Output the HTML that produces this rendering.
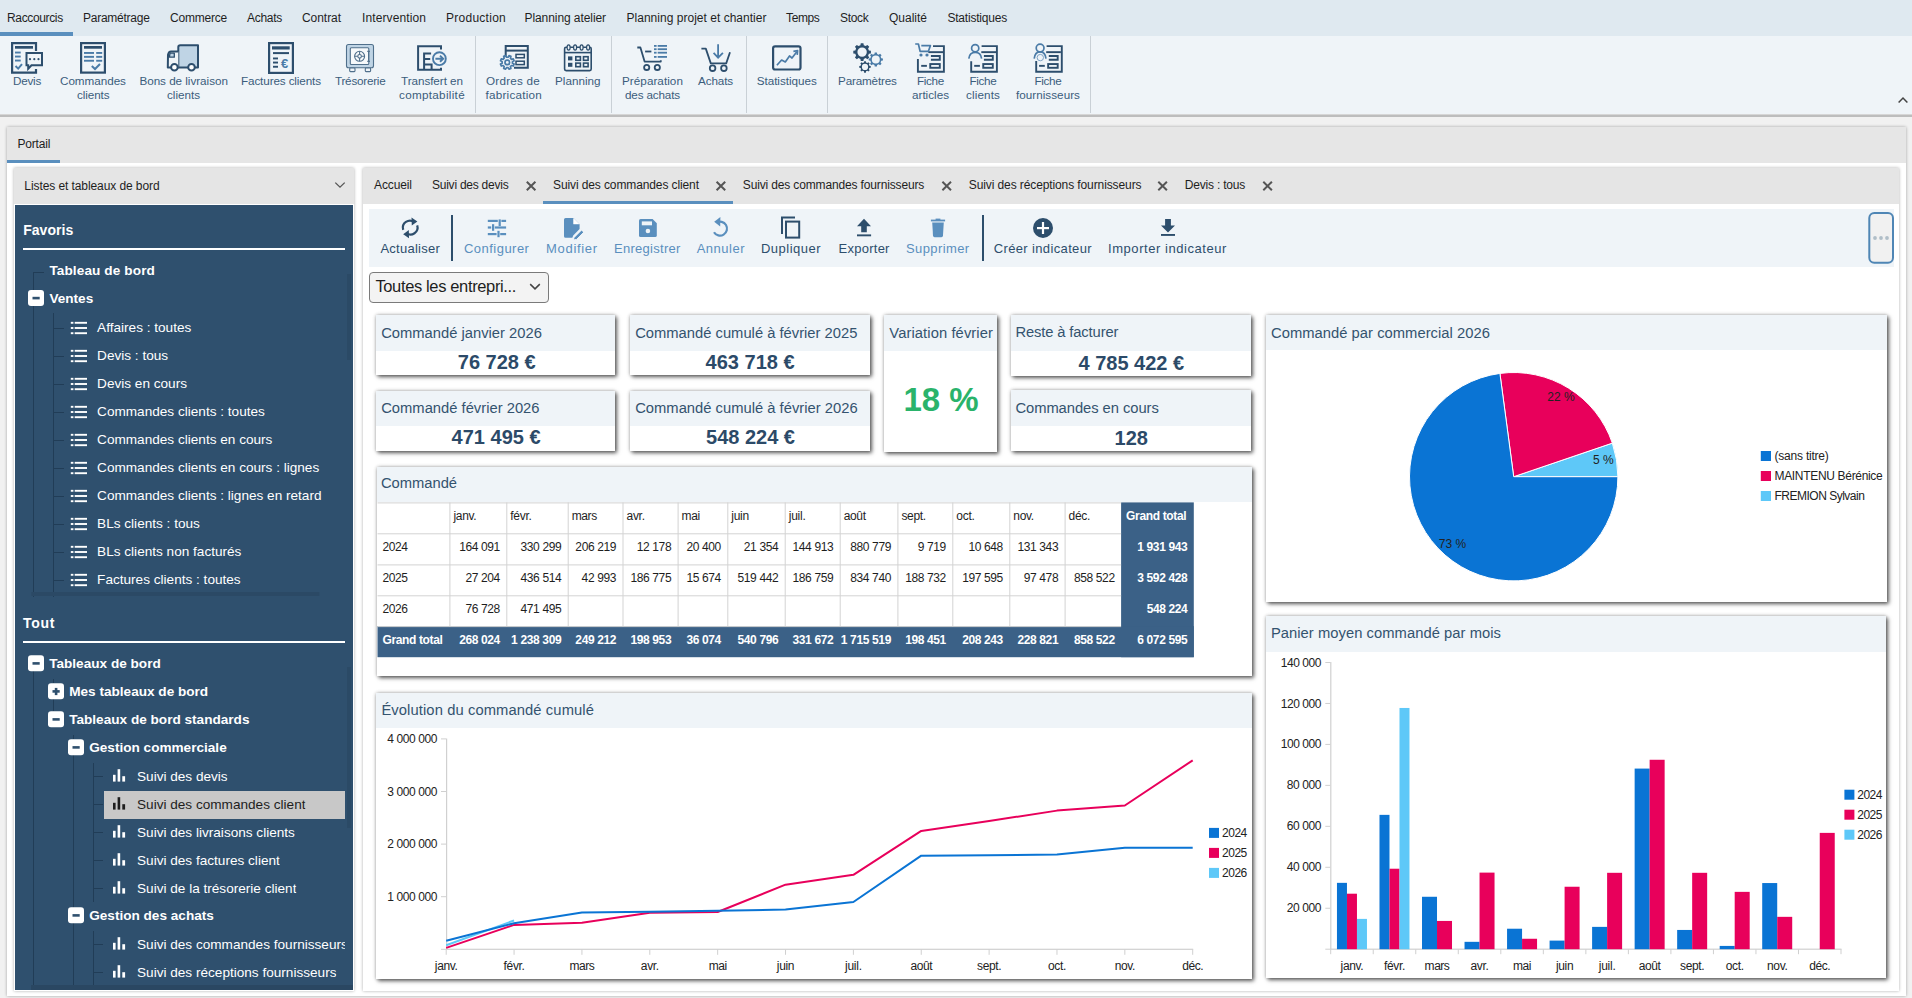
<!DOCTYPE html><html><head><meta charset="utf-8"><style>
html,body{margin:0;padding:0;}
body{width:1912px;height:998px;position:relative;overflow:hidden;background:#f1f1f1;font-family:"Liberation Sans",sans-serif;}
body div{position:absolute;}
.t{white-space:nowrap;}
svg{position:absolute;left:0;top:0;overflow:visible;}
</style></head><body>
<div style="left:0px;top:0px;width:1912px;height:36px;background:#dfe9f0;"></div>
<div style="left:0px;top:32px;width:73px;height:4px;background:#5a8fbe;"></div>
<div class="t" style="left:7.00px;top:11.84px;font-size:12px;line-height:12px;color:#1f1f1f;letter-spacing:-0.355px;">Raccourcis</div>
<div class="t" style="left:83.00px;top:11.84px;font-size:12px;line-height:12px;color:#1f1f1f;letter-spacing:-0.251px;">Paramétrage</div>
<div class="t" style="left:170.00px;top:11.84px;font-size:12px;line-height:12px;color:#1f1f1f;letter-spacing:-0.209px;">Commerce</div>
<div class="t" style="left:247.00px;top:11.84px;font-size:12px;line-height:12px;color:#1f1f1f;letter-spacing:-0.281px;">Achats</div>
<div class="t" style="left:302.00px;top:11.84px;font-size:12px;line-height:12px;color:#1f1f1f;letter-spacing:-0.050px;">Contrat</div>
<div class="t" style="left:362.00px;top:11.84px;font-size:12px;line-height:12px;color:#1f1f1f;letter-spacing:0.108px;">Intervention</div>
<div class="t" style="left:446.00px;top:11.84px;font-size:12px;line-height:12px;color:#1f1f1f;letter-spacing:0.263px;">Production</div>
<div class="t" style="left:524.50px;top:11.84px;font-size:12px;line-height:12px;color:#1f1f1f;letter-spacing:-0.076px;">Planning atelier</div>
<div class="t" style="left:626.50px;top:11.84px;font-size:12px;line-height:12px;color:#1f1f1f;letter-spacing:0.022px;">Planning projet et chantier</div>
<div class="t" style="left:786.00px;top:11.84px;font-size:12px;line-height:12px;color:#1f1f1f;letter-spacing:-0.368px;">Temps</div>
<div class="t" style="left:840.00px;top:11.84px;font-size:12px;line-height:12px;color:#1f1f1f;letter-spacing:-0.302px;">Stock</div>
<div class="t" style="left:889.00px;top:11.84px;font-size:12px;line-height:12px;color:#1f1f1f;letter-spacing:-0.003px;">Qualité</div>
<div class="t" style="left:947.40px;top:11.84px;font-size:12px;line-height:12px;color:#1f1f1f;letter-spacing:-0.203px;">Statistiques</div>
<div style="left:0px;top:36px;width:1912px;height:78px;background:#eff4f8;"></div>
<div style="left:0px;top:114px;width:1912px;height:1px;background:#d6d6d6;"></div>
<div style="left:0px;top:115px;width:1912px;height:2px;background:#bdbdbd;"></div>
<div style="left:475px;top:36px;width:1px;height:77px;background:#c9d0d6;"></div>
<div style="left:611px;top:36px;width:1px;height:77px;background:#c9d0d6;"></div>
<div style="left:746px;top:36px;width:1px;height:77px;background:#c9d0d6;"></div>
<div style="left:827px;top:36px;width:1px;height:77px;background:#c9d0d6;"></div>
<div style="left:1090px;top:36px;width:1px;height:77px;background:#c9d0d6;"></div>
<div class="t" style="left:13.00px;top:75.10px;font-size:11.7px;line-height:11.7px;color:#3b5d7c;letter-spacing:-0.251px;">Devis</div>
<div class="t" style="left:60.00px;top:75.10px;font-size:11.7px;line-height:11.7px;color:#3b5d7c;letter-spacing:-0.036px;">Commandes</div>
<div class="t" style="left:77.00px;top:89.10px;font-size:11.7px;line-height:11.7px;color:#3b5d7c;letter-spacing:-0.095px;">clients</div>
<div class="t" style="left:139.40px;top:75.10px;font-size:11.7px;line-height:11.7px;color:#3b5d7c;letter-spacing:-0.029px;">Bons de livraison</div>
<div class="t" style="left:167.00px;top:89.10px;font-size:11.7px;line-height:11.7px;color:#3b5d7c;letter-spacing:-0.023px;">clients</div>
<div class="t" style="left:241.00px;top:75.10px;font-size:11.7px;line-height:11.7px;color:#3b5d7c;letter-spacing:-0.120px;">Factures clients</div>
<div class="t" style="left:335.00px;top:75.10px;font-size:11.7px;line-height:11.7px;color:#3b5d7c;letter-spacing:-0.237px;">Trésorerie</div>
<div class="t" style="left:401.00px;top:75.10px;font-size:11.7px;line-height:11.7px;color:#3b5d7c;letter-spacing:-0.053px;">Transfert en</div>
<div class="t" style="left:399.00px;top:89.10px;font-size:11.7px;line-height:11.7px;color:#3b5d7c;letter-spacing:0.298px;">comptabilité</div>
<div class="t" style="left:486.00px;top:75.10px;font-size:11.7px;line-height:11.7px;color:#3b5d7c;letter-spacing:0.220px;">Ordres de</div>
<div class="t" style="left:485.60px;top:89.10px;font-size:11.7px;line-height:11.7px;color:#3b5d7c;letter-spacing:0.220px;">fabrication</div>
<div class="t" style="left:555.00px;top:75.10px;font-size:11.7px;line-height:11.7px;color:#3b5d7c;letter-spacing:0.008px;">Planning</div>
<div class="t" style="left:622.00px;top:75.10px;font-size:11.7px;line-height:11.7px;color:#3b5d7c;letter-spacing:0.047px;">Préparation</div>
<div class="t" style="left:625.00px;top:89.10px;font-size:11.7px;line-height:11.7px;color:#3b5d7c;letter-spacing:-0.158px;">des achats</div>
<div class="t" style="left:698.00px;top:75.10px;font-size:11.7px;line-height:11.7px;color:#3b5d7c;letter-spacing:-0.128px;">Achats</div>
<div class="t" style="left:756.70px;top:75.10px;font-size:11.7px;line-height:11.7px;color:#3b5d7c;letter-spacing:-0.032px;">Statistiques</div>
<div class="t" style="left:838.00px;top:75.10px;font-size:11.7px;line-height:11.7px;color:#3b5d7c;letter-spacing:-0.167px;">Paramètres</div>
<div class="t" style="left:917.00px;top:75.10px;font-size:11.7px;line-height:11.7px;color:#3b5d7c;letter-spacing:-0.322px;">Fiche</div>
<div class="t" style="left:912.00px;top:89.10px;font-size:11.7px;line-height:11.7px;color:#3b5d7c;letter-spacing:-0.007px;">articles</div>
<div class="t" style="left:969.50px;top:75.10px;font-size:11.7px;line-height:11.7px;color:#3b5d7c;letter-spacing:-0.322px;">Fiche</div>
<div class="t" style="left:966.00px;top:89.10px;font-size:11.7px;line-height:11.7px;color:#3b5d7c;letter-spacing:0.120px;">clients</div>
<div class="t" style="left:1034.50px;top:75.10px;font-size:11.7px;line-height:11.7px;color:#3b5d7c;letter-spacing:-0.322px;">Fiche</div>
<div class="t" style="left:1016.00px;top:89.10px;font-size:11.7px;line-height:11.7px;color:#3b5d7c;letter-spacing:0.023px;">fournisseurs</div>
<svg width="1912" height="120" style="left:0;top:0">
<g fill="none" stroke="#2d4e6d" stroke-width="2.2">
 <!-- Devis -->
 <path d="M36,51 V43.1 H12.1 V72.6 H36 V69"/>
 <path d="M26.5,53 H42 V65.2 H31.5 L28.2,68.8 V65.2 H26.5 Z" fill="#eff4f8" stroke-width="2"/>
 <!-- Commandes -->
 <rect x="81.1" y="43.1" width="23.8" height="29.5"/>
 <!-- Factures -->
 <rect x="269.1" y="43.1" width="23.8" height="29.8"/>
</g>
<g fill="#2d4e6d">
 <rect x="15" y="46" width="18" height="2.7"/>
 <circle cx="30" cy="59.2" r="1.1"/><circle cx="34.3" cy="59.2" r="1.1"/><circle cx="38.5" cy="59.2" r="1.1"/>
 <rect x="84" y="46" width="18" height="2.7"/>
 <rect x="272" y="46.3" width="17.7" height="3.2"/>
 <rect x="273" y="52.1" width="16" height="2"/>
 <rect x="273" y="57.5" width="5" height="1.9"/><rect x="273" y="61.6" width="5" height="1.9"/><rect x="273" y="65.8" width="5" height="1.9"/>
</g>
<g fill="#4a7ba7">
 <rect x="15" y="51.6" width="5.7" height="1.9"/><rect x="15" y="55.6" width="5.7" height="1.9"/><rect x="15" y="59.6" width="5.7" height="1.9"/>
 <rect x="84" y="52" width="10" height="1.9"/><rect x="96.2" y="52" width="6" height="1.9"/>
 <rect x="84" y="55.9" width="10" height="1.9"/><rect x="96.2" y="55.9" width="6" height="1.9"/>
 <rect x="84" y="59.8" width="10" height="1.9"/><rect x="96.2" y="59.8" width="6" height="1.9"/>
</g>
<g fill="none" stroke="#4a7ba7" stroke-width="2">
 <path d="M15.5,66 L18.2,68.6 L22,64.2"/>
 <path d="M91.8,66 L95,69 L100,64"/>
</g>
<text x="284.5" y="67.6" font-family="Liberation Sans" font-weight="bold" font-size="13" fill="#4a7ba7" text-anchor="middle">€</text>
<!-- Truck -->
<g stroke="#2d4e6d" stroke-width="2" stroke-linejoin="round">
 <path d="M178.3,67.5 V47 Q178.3,45.2 180.3,45.2 H198 V67.5 Z" fill="#bfd4e5"/>
 <path d="M178.3,51.6 H171 Q168.6,51.6 168,55 L167.8,67.5 H178.3" fill="#eff4f8"/>
 <path d="M170,53.2 H174.3 V57.2 H169.4 Z" fill="#bfd4e5" stroke-width="1.3"/>
 <circle cx="174.4" cy="67.2" r="3.3" fill="#fff"/>
 <circle cx="191.5" cy="67.2" r="3.3" fill="#fff"/>
</g>
<!-- Tresorerie -->
<g stroke="#4f6f8b" stroke-width="1.1">
 <rect x="346.5" y="44.5" width="27" height="23.3" rx="2" fill="#bfd4e5"/>
 <rect x="349.7" y="68" width="5.3" height="3.6" rx="0.8" fill="#eff4f8"/>
 <rect x="365.3" y="68" width="5.3" height="3.6" rx="0.8" fill="#eff4f8"/>
 <rect x="350.3" y="47.8" width="18.5" height="16.7" rx="1" fill="#f6f9fb"/>
 <circle cx="359.6" cy="56.3" r="5" fill="none"/>
 <circle cx="359.6" cy="56.3" r="1.8" fill="none"/>
 <path d="M359.6,51.3 V54.5 M359.6,58.1 V61.3 M354.6,56.3 H357.8 M361.4,56.3 H364.6" />
 <path d="M368.6,51.2 V61.6 M367.3,51.4 H369.9 M367.3,61.4 H369.9"/>
</g>
<!-- Transfert -->
<g fill="none" stroke="#2d4e6d" stroke-width="2">
 <path d="M441,49.6 V46.2 H418.1 V69.8 H441 V67.8"/>
 <path d="M424.1,70 V53.4 H431.1 M424.1,59 H430.2 M424.1,64.5 H431.6 V70"/>
</g>
<g fill="none" stroke="#4a7ba7" stroke-width="1.9">
 <circle cx="439.4" cy="58.7" r="6.4"/>
 <path d="M435.4,58.7 H443 M440,55.6 L443.2,58.7 L440,61.8"/>
</g>
<!-- Ordres -->
<g fill="none" stroke="#2d4e6d">
 <path d="M505.7,60 V45.9 H527.8 V67.8 H514" stroke-width="2"/>
 <path d="M505.7,50.6 H527.8" stroke-width="2"/>
 <rect x="516" y="54.4" width="8.3" height="3.4" stroke-width="1.5"/>
 <rect x="516" y="61.2" width="8.3" height="3.4" stroke-width="1.5"/>
</g>
<path d="M512.44,63.17 L514.09,64.09 L513.30,66.01 L511.48,65.49 L510.39,66.58 L510.91,68.40 L508.99,69.19 L508.07,67.54 L506.53,67.54 L505.61,69.19 L503.69,68.40 L504.21,66.58 L503.12,65.49 L501.30,66.01 L500.51,64.09 L502.16,63.17 L502.16,61.63 L500.51,60.71 L501.30,58.79 L503.12,59.31 L504.21,58.22 L503.69,56.40 L505.61,55.61 L506.53,57.26 L508.07,57.26 L508.99,55.61 L510.91,56.40 L510.39,58.22 L511.48,59.31 L513.30,58.79 L514.09,60.71 L512.44,61.63 Z" fill="#eff4f8" stroke="#4a7ba7" stroke-width="1.7" stroke-linejoin="round"/><circle cx="507.3" cy="62.4" r="2.3" fill="none" stroke="#4a7ba7" stroke-width="1.7"/>
<!-- Planning -->
<g fill="none" stroke="#2d4e6d" stroke-width="1.6">
 <rect x="564.6" y="47.2" width="26.6" height="23.4" rx="1.5"/>
 <path d="M564.6,52.6 H591.2"/>
 <rect x="575.8" y="56.7" width="4.6" height="3.6"/><rect x="583.5" y="56.7" width="4.6" height="3.6"/>
 <rect x="575.8" y="63.1" width="4.6" height="3.6"/><rect x="583.5" y="63.1" width="4.6" height="3.6"/>
</g>
<g fill="#2d4e6d">
 <rect x="568" y="56.4" width="4.4" height="4"/><rect x="568" y="62.8" width="4.4" height="4"/>

</g>
<g fill="#eff4f8" stroke="#2d4e6d" stroke-width="1.2">
 <ellipse cx="568.6" cy="47.5" rx="1.5" ry="2.7"/><ellipse cx="575.1" cy="47.5" rx="1.5" ry="2.7"/>
 <ellipse cx="581.6" cy="47.5" rx="1.5" ry="2.7"/><ellipse cx="588.1" cy="47.5" rx="1.5" ry="2.7"/>
</g>
<!-- Preparation -->
<g fill="none" stroke="#2d4e6d" stroke-width="1.8" stroke-linejoin="round">
 <path d="M637.3,47.5 H640.4 L644.6,61.6 H660.8 V60.3"/>
 <circle cx="646.7" cy="67.4" r="2.6"/><circle cx="657.3" cy="67.4" r="2.6"/>
 <path d="M645.1,51.5 H651.4"/>
</g>
<g fill="#4a7ba7">
 <rect x="654" y="45" width="2.6" height="1.8"/><rect x="657.7" y="45" width="9.3" height="1.8"/>
 <rect x="654" y="48.3" width="2.6" height="1.8"/><rect x="657.7" y="48.3" width="9.3" height="1.8"/>
 <rect x="654" y="51.8" width="2.6" height="1.8"/><rect x="657.7" y="51.8" width="9.3" height="1.8"/>
 <rect x="654" y="56" width="2.6" height="1.8"/><rect x="657.7" y="56" width="9.3" height="1.8"/>
</g>
<!-- Achats -->
<g fill="none" stroke="#2d4e6d" stroke-width="1.8" stroke-linejoin="round">
 <path d="M701.4,48.6 H705.8 L710.8,63.4 H726.2 L730,52.2"/>
 <circle cx="712.6" cy="68.2" r="2.8"/><circle cx="723.9" cy="68.2" r="2.8"/>
</g>
<g fill="none" stroke="#4a7ba7" stroke-width="1.8">
 <path d="M718.1,44.2 V57.5 M713.6,52.8 L718.1,57.6 L722.9,52.8"/>
</g>
<!-- Statistiques -->
<rect x="773.1" y="46.3" width="27.4" height="23.2" rx="2" fill="none" stroke="#2d4e6d" stroke-width="2.2"/>
<g fill="none" stroke="#4a7ba7" stroke-width="1.7" stroke-linejoin="round">
 <path d="M776.9,65.3 L781.6,60 L785.3,61.9 L789.5,55.9 L792,58 L796.8,51.8"/>
 <path d="M793.4,51.3 L797.6,50.6 L797.2,54.8"/>
</g>
</svg>
<svg width="1912" height="120" style="left:0;top:0"><path fill="#2d4e6d" fill-rule="evenodd" d="M868.89,50.41 L870.90,50.78 L870.90,53.42 L868.89,53.79 L868.10,55.71 L869.26,57.39 L867.39,59.26 L865.71,58.10 L863.79,58.89 L863.42,60.90 L860.78,60.90 L860.41,58.89 L858.49,58.10 L856.81,59.26 L854.94,57.39 L856.10,55.71 L855.31,53.79 L853.30,53.42 L853.30,50.78 L855.31,50.41 L856.10,48.49 L854.94,46.81 L856.81,44.94 L858.49,46.10 L860.41,45.31 L860.78,43.30 L863.42,43.30 L863.79,45.31 L865.71,46.10 L867.39,44.94 L869.26,46.81 L868.10,48.49 Z M866.80,52.10 A4.7,4.7 0 1 0 857.40,52.10 A4.7,4.7 0 1 0 866.80,52.10 Z"/><path fill="#4a7ba7" fill-rule="evenodd" d="M881.23,58.15 L882.92,58.43 L882.92,60.57 L881.23,60.85 L880.60,62.39 L881.59,63.78 L880.08,65.29 L878.69,64.30 L877.15,64.93 L876.87,66.62 L874.73,66.62 L874.45,64.93 L872.91,64.30 L871.52,65.29 L870.01,63.78 L871.00,62.39 L870.37,60.85 L868.68,60.57 L868.68,58.43 L870.37,58.15 L871.00,56.61 L870.01,55.22 L871.52,53.71 L872.91,54.70 L874.45,54.07 L874.73,52.38 L876.87,52.38 L877.15,54.07 L878.69,54.70 L880.08,53.71 L881.59,55.22 L880.60,56.61 Z M879.80,59.50 A4.0,4.0 0 1 0 871.80,59.50 A4.0,4.0 0 1 0 879.80,59.50 Z"/><path fill="#2d4e6d" fill-rule="evenodd" d="M869.37,65.82 L870.74,66.04 L870.74,67.76 L869.37,67.98 L868.86,69.22 L869.67,70.35 L868.45,71.57 L867.32,70.76 L866.08,71.27 L865.86,72.64 L864.14,72.64 L863.92,71.27 L862.68,70.76 L861.55,71.57 L860.33,70.35 L861.14,69.22 L860.63,67.98 L859.26,67.76 L859.26,66.04 L860.63,65.82 L861.14,64.58 L860.33,63.45 L861.55,62.23 L862.68,63.04 L863.92,62.53 L864.14,61.16 L865.86,61.16 L866.08,62.53 L867.32,63.04 L868.45,62.23 L869.67,63.45 L868.86,64.58 Z M868.10,66.90 A3.1,3.1 0 1 0 861.90,66.90 A3.1,3.1 0 1 0 868.10,66.90 Z"/><path d="M933,46.1 H943.9 V71.7 H917.9 V59" fill="none" stroke="#2d4e6d" stroke-width="1.9"/><rect x="928.3" y="51.2" width="14.7" height="1.9" fill="#2d4e6d"/><path d="M930.9,56.05 H939.8 V59.75 H930.9" fill="none" stroke="#2d4e6d" stroke-width="1.9"/><rect x="930.25" y="64.05" width="9.55" height="3.75" fill="none" stroke="#2d4e6d" stroke-width="1.9"/><rect x="921.1999999999999" y="64.9" width="5.7" height="1.9" fill="#2d4e6d"/><path d="M981.6,46.1 H996.9 V71.7 H971.1999999999999 V61.2" fill="none" stroke="#2d4e6d" stroke-width="1.9"/><rect x="981.3" y="51.2" width="14.7" height="1.9" fill="#2d4e6d"/><path d="M983.9,56.05 H992.8 V59.75 H983.9" fill="none" stroke="#2d4e6d" stroke-width="1.9"/><rect x="983.25" y="64.05" width="9.55" height="3.75" fill="none" stroke="#2d4e6d" stroke-width="1.9"/><rect x="974.1999999999999" y="64.9" width="5.7" height="1.9" fill="#2d4e6d"/><path d="M1046.6,46.1 H1061.8 V71.7 H1036.2 V61.1" fill="none" stroke="#2d4e6d" stroke-width="1.9"/><rect x="1046.2" y="51.2" width="14.7" height="1.9" fill="#2d4e6d"/><path d="M1048.8,56.05 H1057.7 V59.75 H1048.8" fill="none" stroke="#2d4e6d" stroke-width="1.9"/><rect x="1048.15" y="64.05" width="9.55" height="3.75" fill="none" stroke="#2d4e6d" stroke-width="1.9"/><rect x="1039.1000000000001" y="64.9" width="5.7" height="1.9" fill="#2d4e6d"/><g fill="none" stroke="#4a7ba7" stroke-width="1.7" stroke-linejoin="round"><path d="M915.2,44 H918.4 L920.1,51.3 H928.4 L930.4,45.6 H921.3"/></g><circle cx="921" cy="55" r="1.6" fill="#4a7ba7"/><circle cx="927" cy="55" r="1.6" fill="#4a7ba7"/><g fill="none" stroke="#4a7ba7" stroke-width="1.7"><circle cx="975.2" cy="48.2" r="3.6"/><path d="M968.8,58.6 Q969.6,52.4 975.2,52.4 Q980.8,52.4 981.6,58.6"/></g><g fill="none" stroke="#4a7ba7" stroke-width="1.7"><circle cx="1040.1" cy="48.1" r="3.9"/><path d="M1034.2,58.6 Q1035,51.9 1040.1,51.9 Q1045.2,51.9 1046,58.6"/></g><circle cx="1040.3" cy="57.6" r="3.2" fill="none" stroke="#7fa3c4" stroke-width="1"/><path d="M1898.6,102.6 L1903,98 L1907.4,102.6" fill="none" stroke="#444" stroke-width="1.5"/></svg>
<div style="left:7px;top:127px;width:1899px;height:869px;background:#ffffff;box-shadow:0 0 3px rgba(0,0,0,0.32);"></div>
<div style="left:7px;top:127px;width:1899px;height:36px;background:#e6e6e6;"></div>
<div class="t" style="left:17.40px;top:137.84px;font-size:12px;line-height:12px;color:#1e1e1e;letter-spacing:-0.173px;">Portail</div>
<div style="left:7px;top:160px;width:53px;height:3px;background:#5a8fbe;"></div>
<div style="left:14px;top:168px;width:340px;height:823px;background:#ffffff;box-shadow:0 0 3px rgba(0,0,0,0.32);"></div>
<div style="left:14px;top:168px;width:340px;height:36px;background:#e5e5e5;"></div>
<div class="t" style="left:24.30px;top:180.04px;font-size:12px;line-height:12px;color:#1e1e1e;letter-spacing:-0.085px;">Listes et tableaux de bord</div>
<svg width="20" height="20" style="left:330px;top:176px"><path d="M5.3,6.6 L10,11.2 L14.7,6.6" fill="none" stroke="#555" stroke-width="1.3"/></svg>
<div style="left:15px;top:205px;width:338px;height:785px;background:#2f506e;"></div>
<div style="left:363px;top:168px;width:1536px;height:823px;background:#ffffff;box-shadow:0 0 3px rgba(0,0,0,0.32);"></div>
<div style="left:363px;top:168px;width:1536px;height:36px;background:#e5e5e5;"></div>
<div class="t" style="left:374.00px;top:178.64px;font-size:12px;line-height:12px;color:#1e1e1e;letter-spacing:-0.126px;">Accueil</div>
<div class="t" style="left:432.00px;top:178.64px;font-size:12px;line-height:12px;color:#1e1e1e;letter-spacing:-0.242px;">Suivi des devis</div>
<div class="t" style="left:553.00px;top:178.64px;font-size:12px;line-height:12px;color:#1e1e1e;letter-spacing:-0.109px;">Suivi des commandes client</div>
<div class="t" style="left:742.80px;top:178.64px;font-size:12px;line-height:12px;color:#1e1e1e;letter-spacing:-0.146px;">Suivi des commandes fournisseurs</div>
<div class="t" style="left:968.80px;top:178.64px;font-size:12px;line-height:12px;color:#1e1e1e;letter-spacing:-0.105px;">Suivi des réceptions fournisseurs</div>
<div class="t" style="left:1184.80px;top:178.64px;font-size:12px;line-height:12px;color:#1e1e1e;letter-spacing:-0.207px;">Devis : tous</div>
<svg width="1912" height="998" style="left:0;top:0"><path d="M526.8,181.8 L535.4,190.2 M535.4,181.8 L526.8,190.2" stroke="#555" stroke-width="2" fill="none"/><path d="M716.5999999999999,181.8 L725.1999999999999,190.2 M725.1999999999999,181.8 L716.5999999999999,190.2" stroke="#555" stroke-width="2" fill="none"/><path d="M942.4,181.8 L951.0,190.2 M951.0,181.8 L942.4,190.2" stroke="#555" stroke-width="2" fill="none"/><path d="M1158.3,181.8 L1166.9,190.2 M1166.9,181.8 L1158.3,190.2" stroke="#555" stroke-width="2" fill="none"/><path d="M1263.3,181.8 L1271.9,190.2 M1271.9,181.8 L1263.3,190.2" stroke="#555" stroke-width="2" fill="none"/></svg>
<div style="left:543px;top:201px;width:190px;height:3px;background:#5a8fbe;"></div>
<div style="left:369px;top:209px;width:1525px;height:57.6px;background:#eff4f8;"></div>
<svg width="1912" height="998" style="left:0;top:0"><rect x="33" y="272" width="11" height="1" fill="#213d57"/><rect x="33" y="272" width="1" height="325" fill="#213d57"/><rect x="28" y="290.0" width="16" height="16" rx="3" fill="#fff"/><rect x="32.5" y="296.8" width="7.2" height="2.6" fill="#2f506e"/><rect x="53" y="313" width="1" height="284" fill="#213d57"/><rect x="53" y="328" width="11" height="1" fill="#213d57"/><rect x="70.8" y="321.85" width="2.6" height="1.9" fill="#fff"/><rect x="74.7" y="321.85" width="12.3" height="1.9" fill="#fff"/><rect x="70.8" y="327.05" width="2.6" height="1.9" fill="#fff"/><rect x="74.7" y="327.05" width="12.3" height="1.9" fill="#fff"/><rect x="70.8" y="332.25" width="2.6" height="1.9" fill="#fff"/><rect x="74.7" y="332.25" width="12.3" height="1.9" fill="#fff"/><rect x="53" y="356" width="11" height="1" fill="#213d57"/><rect x="70.8" y="349.85" width="2.6" height="1.9" fill="#fff"/><rect x="74.7" y="349.85" width="12.3" height="1.9" fill="#fff"/><rect x="70.8" y="355.05" width="2.6" height="1.9" fill="#fff"/><rect x="74.7" y="355.05" width="12.3" height="1.9" fill="#fff"/><rect x="70.8" y="360.25" width="2.6" height="1.9" fill="#fff"/><rect x="74.7" y="360.25" width="12.3" height="1.9" fill="#fff"/><rect x="53" y="384" width="11" height="1" fill="#213d57"/><rect x="70.8" y="377.85" width="2.6" height="1.9" fill="#fff"/><rect x="74.7" y="377.85" width="12.3" height="1.9" fill="#fff"/><rect x="70.8" y="383.05" width="2.6" height="1.9" fill="#fff"/><rect x="74.7" y="383.05" width="12.3" height="1.9" fill="#fff"/><rect x="70.8" y="388.25" width="2.6" height="1.9" fill="#fff"/><rect x="74.7" y="388.25" width="12.3" height="1.9" fill="#fff"/><rect x="53" y="412" width="11" height="1" fill="#213d57"/><rect x="70.8" y="405.85" width="2.6" height="1.9" fill="#fff"/><rect x="74.7" y="405.85" width="12.3" height="1.9" fill="#fff"/><rect x="70.8" y="411.05" width="2.6" height="1.9" fill="#fff"/><rect x="74.7" y="411.05" width="12.3" height="1.9" fill="#fff"/><rect x="70.8" y="416.25" width="2.6" height="1.9" fill="#fff"/><rect x="74.7" y="416.25" width="12.3" height="1.9" fill="#fff"/><rect x="53" y="440" width="11" height="1" fill="#213d57"/><rect x="70.8" y="433.85" width="2.6" height="1.9" fill="#fff"/><rect x="74.7" y="433.85" width="12.3" height="1.9" fill="#fff"/><rect x="70.8" y="439.05" width="2.6" height="1.9" fill="#fff"/><rect x="74.7" y="439.05" width="12.3" height="1.9" fill="#fff"/><rect x="70.8" y="444.25" width="2.6" height="1.9" fill="#fff"/><rect x="74.7" y="444.25" width="12.3" height="1.9" fill="#fff"/><rect x="53" y="468" width="11" height="1" fill="#213d57"/><rect x="70.8" y="461.85" width="2.6" height="1.9" fill="#fff"/><rect x="74.7" y="461.85" width="12.3" height="1.9" fill="#fff"/><rect x="70.8" y="467.05" width="2.6" height="1.9" fill="#fff"/><rect x="74.7" y="467.05" width="12.3" height="1.9" fill="#fff"/><rect x="70.8" y="472.25" width="2.6" height="1.9" fill="#fff"/><rect x="74.7" y="472.25" width="12.3" height="1.9" fill="#fff"/><rect x="53" y="496" width="11" height="1" fill="#213d57"/><rect x="70.8" y="489.85" width="2.6" height="1.9" fill="#fff"/><rect x="74.7" y="489.85" width="12.3" height="1.9" fill="#fff"/><rect x="70.8" y="495.05" width="2.6" height="1.9" fill="#fff"/><rect x="74.7" y="495.05" width="12.3" height="1.9" fill="#fff"/><rect x="70.8" y="500.25" width="2.6" height="1.9" fill="#fff"/><rect x="74.7" y="500.25" width="12.3" height="1.9" fill="#fff"/><rect x="53" y="524" width="11" height="1" fill="#213d57"/><rect x="70.8" y="517.8499999999999" width="2.6" height="1.9" fill="#fff"/><rect x="74.7" y="517.8499999999999" width="12.3" height="1.9" fill="#fff"/><rect x="70.8" y="523.05" width="2.6" height="1.9" fill="#fff"/><rect x="74.7" y="523.05" width="12.3" height="1.9" fill="#fff"/><rect x="70.8" y="528.25" width="2.6" height="1.9" fill="#fff"/><rect x="74.7" y="528.25" width="12.3" height="1.9" fill="#fff"/><rect x="53" y="552" width="11" height="1" fill="#213d57"/><rect x="70.8" y="545.8499999999999" width="2.6" height="1.9" fill="#fff"/><rect x="74.7" y="545.8499999999999" width="12.3" height="1.9" fill="#fff"/><rect x="70.8" y="551.05" width="2.6" height="1.9" fill="#fff"/><rect x="74.7" y="551.05" width="12.3" height="1.9" fill="#fff"/><rect x="70.8" y="556.25" width="2.6" height="1.9" fill="#fff"/><rect x="74.7" y="556.25" width="12.3" height="1.9" fill="#fff"/><rect x="53" y="580" width="11" height="1" fill="#213d57"/><rect x="70.8" y="573.8499999999999" width="2.6" height="1.9" fill="#fff"/><rect x="74.7" y="573.8499999999999" width="12.3" height="1.9" fill="#fff"/><rect x="70.8" y="579.05" width="2.6" height="1.9" fill="#fff"/><rect x="74.7" y="579.05" width="12.3" height="1.9" fill="#fff"/><rect x="70.8" y="584.25" width="2.6" height="1.9" fill="#fff"/><rect x="74.7" y="584.25" width="12.3" height="1.9" fill="#fff"/><rect x="31.4" y="592" width="288" height="4" fill="#2b4965"/><rect x="104" y="791" width="241" height="28" fill="#c8c8c8"/><rect x="33" y="671" width="1" height="319" fill="#213d57"/><rect x="53" y="679" width="1" height="4" fill="#213d57"/><rect x="53" y="699" width="1" height="12" fill="#213d57"/><rect x="73" y="735" width="1" height="4" fill="#213d57"/><rect x="73" y="755" width="1" height="235" fill="#213d57"/><rect x="93" y="763" width="1" height="139" fill="#213d57"/><rect x="93" y="931" width="1" height="59" fill="#213d57"/><rect x="28" y="655.3" width="16" height="16" rx="3" fill="#fff"/><rect x="32.5" y="662.0999999999999" width="7.2" height="2.6" fill="#2f506e"/><rect x="48" y="683.3" width="16" height="16" rx="3" fill="#fff"/><rect x="52.5" y="690.0999999999999" width="7.2" height="2.6" fill="#2f506e"/><rect x="54.8" y="687.9" width="2.6" height="7.2" fill="#2f506e"/><rect x="48" y="711.3" width="16" height="16" rx="3" fill="#fff"/><rect x="52.5" y="718.0999999999999" width="7.2" height="2.6" fill="#2f506e"/><rect x="68" y="739.3" width="16" height="16" rx="3" fill="#fff"/><rect x="72.5" y="746.0999999999999" width="7.2" height="2.6" fill="#2f506e"/><rect x="93" y="776" width="10" height="1" fill="#213d57"/><rect x="113" y="774.8" width="2.6" height="6.8" fill="#ffffff"/><rect x="117.6" y="769.2" width="2.6" height="12.4" fill="#ffffff"/><rect x="122.3" y="776.2" width="2.8" height="5.4" fill="#ffffff"/><rect x="93" y="804" width="10" height="1" fill="#213d57"/><rect x="113" y="802.8" width="2.6" height="6.8" fill="#1e1e1e"/><rect x="117.6" y="797.2" width="2.6" height="12.4" fill="#1e1e1e"/><rect x="122.3" y="804.2" width="2.8" height="5.4" fill="#1e1e1e"/><rect x="93" y="832" width="10" height="1" fill="#213d57"/><rect x="113" y="830.8" width="2.6" height="6.8" fill="#ffffff"/><rect x="117.6" y="825.2" width="2.6" height="12.4" fill="#ffffff"/><rect x="122.3" y="832.2" width="2.8" height="5.4" fill="#ffffff"/><rect x="93" y="860" width="10" height="1" fill="#213d57"/><rect x="113" y="858.8" width="2.6" height="6.8" fill="#ffffff"/><rect x="117.6" y="853.2" width="2.6" height="12.4" fill="#ffffff"/><rect x="122.3" y="860.2" width="2.8" height="5.4" fill="#ffffff"/><rect x="93" y="888" width="10" height="1" fill="#213d57"/><rect x="113" y="886.8" width="2.6" height="6.8" fill="#ffffff"/><rect x="117.6" y="881.2" width="2.6" height="12.4" fill="#ffffff"/><rect x="122.3" y="888.2" width="2.8" height="5.4" fill="#ffffff"/><rect x="68" y="907.3" width="16" height="16" rx="3" fill="#fff"/><rect x="72.5" y="914.0999999999999" width="7.2" height="2.6" fill="#2f506e"/><rect x="93" y="944" width="10" height="1" fill="#213d57"/><rect x="113" y="942.8" width="2.6" height="6.8" fill="#ffffff"/><rect x="117.6" y="937.2" width="2.6" height="12.4" fill="#ffffff"/><rect x="122.3" y="944.2" width="2.8" height="5.4" fill="#ffffff"/><rect x="93" y="972" width="10" height="1" fill="#213d57"/><rect x="113" y="970.8" width="2.6" height="6.8" fill="#ffffff"/><rect x="117.6" y="965.2" width="2.6" height="12.4" fill="#ffffff"/><rect x="122.3" y="972.2" width="2.8" height="5.4" fill="#ffffff"/><rect x="347" y="274" width="4" height="86" fill="#2b4a66"/><rect x="347" y="667" width="3.6" height="161" fill="#2b4a66"/><rect x="31" y="985" width="322" height="5" fill="#2a4762"/></svg>
<div class="t" style="left:23.20px;top:223.15px;font-size:14px;line-height:14px;color:#ffffff;font-weight:bold;letter-spacing:0.029px;">Favoris</div>
<div style="left:23px;top:248px;width:322px;height:2px;background:#ffffff;"></div>
<div class="t" style="left:49.40px;top:264.49px;font-size:13.6px;line-height:13.6px;color:#ffffff;font-weight:bold;letter-spacing:0.106px;">Tableau de bord</div>
<div class="t" style="left:49.40px;top:292.19px;font-size:13.6px;line-height:13.6px;color:#ffffff;font-weight:bold;">Ventes</div>
<div class="t" style="left:97.10px;top:320.99px;font-size:13.6px;line-height:13.6px;color:#ffffff;">Affaires : toutes</div>
<div class="t" style="left:97.10px;top:348.99px;font-size:13.6px;line-height:13.6px;color:#ffffff;">Devis : tous</div>
<div class="t" style="left:97.10px;top:376.99px;font-size:13.6px;line-height:13.6px;color:#ffffff;">Devis en cours</div>
<div class="t" style="left:97.10px;top:404.99px;font-size:13.6px;line-height:13.6px;color:#ffffff;">Commandes clients : toutes</div>
<div class="t" style="left:97.10px;top:432.99px;font-size:13.6px;line-height:13.6px;color:#ffffff;">Commandes clients en cours</div>
<div class="t" style="left:97.10px;top:460.99px;font-size:13.6px;line-height:13.6px;color:#ffffff;">Commandes clients en cours : lignes</div>
<div class="t" style="left:97.10px;top:488.99px;font-size:13.6px;line-height:13.6px;color:#ffffff;">Commandes clients : lignes en retard</div>
<div class="t" style="left:97.10px;top:516.99px;font-size:13.6px;line-height:13.6px;color:#ffffff;">BLs clients : tous</div>
<div class="t" style="left:97.10px;top:544.99px;font-size:13.6px;line-height:13.6px;color:#ffffff;">BLs clients non facturés</div>
<div class="t" style="left:97.10px;top:572.99px;font-size:13.6px;line-height:13.6px;color:#ffffff;">Factures clients : toutes</div>
<div class="t" style="left:23.10px;top:616.15px;font-size:14px;line-height:14px;color:#ffffff;font-weight:bold;letter-spacing:0.656px;">Tout</div>
<div style="left:23px;top:641px;width:322px;height:2px;background:#ffffff;"></div>
<div class="t" style="left:49.20px;top:657.49px;font-size:13.6px;line-height:13.6px;color:#ffffff;font-weight:bold;">Tableaux de bord</div>
<div class="t" style="left:69.20px;top:685.49px;font-size:13.6px;line-height:13.6px;color:#ffffff;font-weight:bold;">Mes tableaux de bord</div>
<div class="t" style="left:69.20px;top:713.49px;font-size:13.6px;line-height:13.6px;color:#ffffff;font-weight:bold;">Tableaux de bord standards</div>
<div class="t" style="left:89.20px;top:741.49px;font-size:13.6px;line-height:13.6px;color:#ffffff;font-weight:bold;">Gestion commerciale</div>
<div class="t" style="left:137.00px;top:769.79px;font-size:13.6px;line-height:13.6px;color:#ffffff;clip-path:inset(-5px 0px -5px 0)">Suivi des devis</div>
<div class="t" style="left:137.00px;top:797.79px;font-size:13.6px;line-height:13.6px;color:#1e1e1e;clip-path:inset(-5px 0px -5px 0)">Suivi des commandes client</div>
<div class="t" style="left:137.00px;top:825.79px;font-size:13.6px;line-height:13.6px;color:#ffffff;clip-path:inset(-5px 0px -5px 0)">Suivi des livraisons clients</div>
<div class="t" style="left:137.00px;top:853.79px;font-size:13.6px;line-height:13.6px;color:#ffffff;clip-path:inset(-5px 0px -5px 0)">Suivi des factures client</div>
<div class="t" style="left:137.00px;top:881.79px;font-size:13.6px;line-height:13.6px;color:#ffffff;clip-path:inset(-5px 0px -5px 0)">Suivi de la trésorerie client</div>
<div class="t" style="left:89.20px;top:909.49px;font-size:13.6px;line-height:13.6px;color:#ffffff;font-weight:bold;">Gestion des achats</div>
<div class="t" style="left:137.00px;top:937.79px;font-size:13.6px;line-height:13.6px;color:#ffffff;clip-path:inset(-5px 2.8807500000000346px -5px 0)">Suivi des commandes fournisseurs</div>
<div class="t" style="left:137.00px;top:965.79px;font-size:13.6px;line-height:13.6px;color:#ffffff;clip-path:inset(-5px 0px -5px 0)">Suivi des réceptions fournisseurs</div>
<div class="t" style="left:380.40px;top:241.80px;font-size:13px;line-height:13px;color:#2d4e6c;letter-spacing:0.252px;">Actualiser</div>
<div class="t" style="left:464.00px;top:241.80px;font-size:13px;line-height:13px;color:#5a8fbe;letter-spacing:0.471px;">Configurer</div>
<div class="t" style="left:546.00px;top:241.80px;font-size:13px;line-height:13px;color:#5a8fbe;letter-spacing:0.696px;">Modifier</div>
<div class="t" style="left:614.00px;top:241.80px;font-size:13px;line-height:13px;color:#5a8fbe;letter-spacing:0.284px;">Enregistrer</div>
<div class="t" style="left:696.70px;top:241.80px;font-size:13px;line-height:13px;color:#5a8fbe;letter-spacing:0.499px;">Annuler</div>
<div class="t" style="left:761.00px;top:241.80px;font-size:13px;line-height:13px;color:#2d4e6c;letter-spacing:0.484px;">Dupliquer</div>
<div class="t" style="left:838.50px;top:241.80px;font-size:13px;line-height:13px;color:#2d4e6c;letter-spacing:0.259px;">Exporter</div>
<div class="t" style="left:906.00px;top:241.80px;font-size:13px;line-height:13px;color:#5a8fbe;letter-spacing:0.393px;">Supprimer</div>
<div class="t" style="left:993.70px;top:241.80px;font-size:13px;line-height:13px;color:#2d4e6c;letter-spacing:0.364px;">Créer indicateur</div>
<div class="t" style="left:1108.00px;top:241.80px;font-size:13px;line-height:13px;color:#2d4e6c;letter-spacing:0.559px;">Importer indicateur</div>
<div style="left:451.2px;top:215px;width:2px;height:45.5px;background:#2d4e6c;"></div>
<div style="left:982px;top:214.5px;width:2px;height:46px;background:#2d4e6c;"></div>
<svg width="1912" height="998" style="left:0;top:0">
<!-- refresh -->
<g fill="none" stroke="#2d4e6c" stroke-width="2.2">
 <path d="M403.2,229.8 A7,7 0 0 1 414.2,222.2"/>
 <path d="M417.2,225.4 A7,7 0 0 1 406.2,233"/>
</g>
<path d="M411.5,217.6 L417.4,221.6 L411.8,225.6 Z" fill="#2d4e6c"/>
<path d="M409,238.3 L403.2,234.2 L408.8,230 Z" fill="#2d4e6c"/>
<!-- sliders -->
<g fill="#5a8fbe">
 <rect x="487.8" y="219.8" width="10" height="2.2"/><rect x="501.4" y="219.8" width="4.7" height="2.2"/><rect x="498.6" y="217.6" width="2.2" height="6.6" transform="translate(0,1.8)"/>
 <rect x="487.8" y="226.4" width="3.4" height="2.2"/><rect x="494.8" y="226.4" width="11.3" height="2.2"/><rect x="492" y="224.2" width="2.2" height="6.6"/>
 <rect x="487.8" y="233" width="8.8" height="2.2"/><rect x="500.2" y="233" width="5.9" height="2.2"/><rect x="497.4" y="230.8" width="2.2" height="6.4"/>
</g>
<!-- modifier -->
<path d="M564,219.6 Q564,218 565.6,218 H573.4 L579.6,224.2 V229 L573.2,235.4 L572.4,237.8 H565.6 Q564,237.8 564,236.2 Z" fill="#5a8fbe"/>
<path d="M573.4,218 V224.2 H579.6" fill="#eef3f7" />
<path d="M573.6,224 L573.6,218.6 L579,224 Z" fill="#fff"/>
<path d="M574.6,237.6 L581.6,230.6 L583.4,232.4 L576.4,239.4 L573.8,239.8 Z" fill="#5a8fbe"/>
<path d="M573.6,236.4 L581.4,228.6 L584.4,231.6 L576.6,239.4 L572.8,240.2 Z" fill="none" stroke="#eef3f7" stroke-width="1"/>
<!-- floppy -->
<path d="M639,220.6 Q639,219 640.6,219 H652.6 L656.8,223.2 V235.4 Q656.8,237 655.2,237 H640.6 Q639,237 639,235.4 Z" fill="#5a8fbe"/>
<rect x="641.8" y="221.4" width="10.2" height="3.9" fill="#eef3f7"/>
<circle cx="647.9" cy="231" r="2.3" fill="#eef3f7"/>
<!-- undo -->
<g fill="none" stroke="#5a8fbe" stroke-width="2.2">
 <path d="M716.4,222.6 A7,7 0 1 1 714,232.2"/>
</g>
<path d="M720.4,217 L714.2,221.8 L720.2,226.6 Z" fill="#5a8fbe"/>
<!-- copy -->
<g fill="none" stroke="#2d4e6c" stroke-width="2">
 <path d="M782,234 V217.6 H795"/>
 <rect x="786" y="221.6" width="13.2" height="16"/>
</g>
<!-- export -->
<path d="M864,218.8 L871,226.2 H866.8 V232.2 H861.2 V226.2 H857 Z" fill="#2d4e6c"/>
<rect x="857" y="234.4" width="14.1" height="1.9" fill="#2d4e6c"/>
<!-- trash -->
<rect x="930.9" y="219.6" width="14.2" height="1.8" fill="#5a8fbe"/>
<rect x="935.6" y="218.6" width="4.8" height="1.6" fill="#5a8fbe"/>
<path d="M932.2,222.6 H943.8 L943,235.6 Q942.9,237.2 941.4,237.2 H934.6 Q933.1,237.2 933,235.6 Z" fill="#5a8fbe"/>
<!-- circle plus -->
<circle cx="1043" cy="228" r="10" fill="#2d4e6c"/>
<rect x="1037" y="227" width="12" height="2.2" fill="#fff"/><rect x="1041.9" y="222" width="2.2" height="12" fill="#fff"/>
<!-- download -->
<path d="M1168,232.4 L1175,225.4 H1170.9 V219 H1165.1 V225.4 H1161 Z" fill="#2d4e6c"/>
<rect x="1161" y="234" width="14" height="1.9" fill="#2d4e6c"/>
<!-- more button -->
<rect x="1869.3" y="213" width="23.7" height="49.8" rx="5" fill="#f1f1f1" stroke="#4f86b5" stroke-width="2"/>
<circle cx="1875" cy="238" r="1.9" fill="#b0bec8"/><circle cx="1881" cy="238" r="1.9" fill="#b0bec8"/><circle cx="1887" cy="238" r="1.9" fill="#b0bec8"/>
</svg>
<div style="left:369.4px;top:272.3px;width:179.4px;height:30.4px;background:#f3f3f3;border:1px solid #7a7a7a;border-radius:4px;box-sizing:border-box;"></div>
<div class="t" style="left:375.40px;top:277.63px;font-size:16.5px;line-height:16.5px;color:#1e1e1e;letter-spacing:-0.362px;">Toutes les entrepri...</div>
<svg width="20" height="20" style="left:525px;top:277px"><path d="M5.2,7.1 L10,11.9 L14.8,7.1" fill="none" stroke="#444" stroke-width="1.5"/></svg>
<div style="left:376.3px;top:315.2px;width:238.99999999999994px;height:60.30000000000001px;background:#ffffff;box-shadow:1.5px 2px 4px rgba(0,0,0,0.6),0 0 3.5px rgba(0,0,0,0.3);"></div>
<div style="left:376.3px;top:315.2px;width:238.99999999999994px;height:35.69999999999999px;background:#eff4f8;"></div>
<div class="t" style="left:381.20px;top:325.51px;font-size:14.75px;line-height:14.75px;color:#34536f;letter-spacing:0.000px;">Commandé janvier 2026</div>
<div class="t" style="left:457.78px;top:351.77px;font-size:20px;line-height:20px;color:#2c4a68;font-weight:bold;">76 728 €</div>
<div style="left:630.3px;top:315.2px;width:239.70000000000005px;height:60.30000000000001px;background:#ffffff;box-shadow:1.5px 2px 4px rgba(0,0,0,0.6),0 0 3.5px rgba(0,0,0,0.3);"></div>
<div style="left:630.3px;top:315.2px;width:239.70000000000005px;height:35.69999999999999px;background:#eff4f8;"></div>
<div class="t" style="left:635.20px;top:325.51px;font-size:14.75px;line-height:14.75px;color:#34536f;letter-spacing:0.001px;">Commandé cumulé à février 2025</div>
<div class="t" style="left:705.62px;top:351.77px;font-size:20px;line-height:20px;color:#2c4a68;font-weight:bold;">463 718 €</div>
<div style="left:376.3px;top:390.7px;width:238.99999999999994px;height:60.5px;background:#ffffff;box-shadow:1.5px 2px 4px rgba(0,0,0,0.6),0 0 3.5px rgba(0,0,0,0.3);"></div>
<div style="left:376.3px;top:390.7px;width:238.99999999999994px;height:35.0px;background:#eff4f8;"></div>
<div class="t" style="left:381.20px;top:401.01px;font-size:14.75px;line-height:14.75px;color:#34536f;letter-spacing:0.004px;">Commandé février 2026</div>
<div class="t" style="left:451.62px;top:427.47px;font-size:20px;line-height:20px;color:#2c4a68;font-weight:bold;">471 495 €</div>
<div style="left:630.3px;top:390.7px;width:239.70000000000005px;height:60.5px;background:#ffffff;box-shadow:1.5px 2px 4px rgba(0,0,0,0.6),0 0 3.5px rgba(0,0,0,0.3);"></div>
<div style="left:630.3px;top:390.7px;width:239.70000000000005px;height:35.0px;background:#eff4f8;"></div>
<div class="t" style="left:635.20px;top:401.01px;font-size:14.75px;line-height:14.75px;color:#34536f;letter-spacing:0.008px;">Commandé cumulé à février 2026</div>
<div class="t" style="left:706.02px;top:427.47px;font-size:20px;line-height:20px;color:#2c4a68;font-weight:bold;">548 224 €</div>
<div style="left:884.2px;top:315.2px;width:112.59999999999991px;height:136.8px;background:#ffffff;box-shadow:1.5px 2px 4px rgba(0,0,0,0.6),0 0 3.5px rgba(0,0,0,0.3);"></div>
<div style="left:884.2px;top:315.2px;width:112.59999999999991px;height:35.69999999999999px;background:#eff4f8;"></div>
<div class="t" style="left:889.30px;top:325.51px;font-size:14.75px;line-height:14.75px;color:#34536f;letter-spacing:0.089px;">Variation février</div>
<div class="t" style="left:903.39px;top:383.07px;font-size:33px;line-height:33px;color:#2ab36b;font-weight:bold;">18 %</div>
<div style="left:1010.5px;top:314.8px;width:240.9000000000001px;height:61.69999999999999px;background:#ffffff;box-shadow:1.5px 2px 4px rgba(0,0,0,0.6),0 0 3.5px rgba(0,0,0,0.3);"></div>
<div style="left:1010.5px;top:314.8px;width:240.9000000000001px;height:36.099999999999966px;background:#eff4f8;"></div>
<div class="t" style="left:1015.40px;top:325.11px;font-size:14.75px;line-height:14.75px;color:#34536f;letter-spacing:-0.127px;">Reste à facturer</div>
<div class="t" style="left:1078.48px;top:352.77px;font-size:20px;line-height:20px;color:#2c4a68;font-weight:bold;">4 785 422 €</div>
<div style="left:1010.5px;top:390.2px;width:240.9000000000001px;height:61.19999999999999px;background:#ffffff;box-shadow:1.5px 2px 4px rgba(0,0,0,0.6),0 0 3.5px rgba(0,0,0,0.3);"></div>
<div style="left:1010.5px;top:390.2px;width:240.9000000000001px;height:35.5px;background:#eff4f8;"></div>
<div class="t" style="left:1015.40px;top:400.51px;font-size:14.75px;line-height:14.75px;color:#34536f;letter-spacing:-0.049px;">Commandes en cours</div>
<div class="t" style="left:1114.52px;top:427.67px;font-size:20px;line-height:20px;color:#2c4a68;font-weight:bold;">128</div>
<div style="left:1265.7px;top:314.8px;width:621.5px;height:286.90000000000003px;background:#ffffff;box-shadow:1.5px 2px 4px rgba(0,0,0,0.6),0 0 3.5px rgba(0,0,0,0.3);"></div>
<div style="left:1265.7px;top:314.8px;width:621.5px;height:35.5px;background:#eff4f8;"></div>
<div class="t" style="left:1271.00px;top:325.91px;font-size:14.75px;line-height:14.75px;color:#34536f;letter-spacing:0.030px;">Commandé par commercial 2026</div>
<svg width="1912" height="998" style="left:0;top:0"><path d="M1513.7,476.7 L1617.90,476.70 A104.2,104.2 0 0 0 1612.34,443.12 Z" fill="#5ec8f8" stroke="#fff" stroke-width="1"/><path d="M1513.7,476.7 L1612.34,443.12 A104.2,104.2 0 0 0 1499.92,373.42 Z" fill="#e8005b" stroke="#fff" stroke-width="1"/><path d="M1513.7,476.7 L1499.92,373.42 A104.2,104.2 0 1 0 1617.90,476.70 Z" fill="#0a74d4" stroke="#fff" stroke-width="1"/><rect x="1760.8" y="451" width="10.2" height="10" fill="#0a74d4"/><rect x="1760.8" y="471" width="10.2" height="10" fill="#e8005b"/><rect x="1760.8" y="491" width="10.2" height="10" fill="#5ec8f8"/></svg>
<div class="t" style="left:1547.32px;top:391.14px;font-size:12px;line-height:12px;color:#222;">22 %</div>
<div class="t" style="left:1593.06px;top:454.14px;font-size:12px;line-height:12px;color:#222;">5 %</div>
<div class="t" style="left:1438.72px;top:537.64px;font-size:12px;line-height:12px;color:#222;">73 %</div>
<div class="t" style="left:1774.50px;top:450.04px;font-size:12px;line-height:12px;color:#222;letter-spacing:-0.214px;">(sans titre)</div>
<div class="t" style="left:1774.50px;top:470.04px;font-size:12px;line-height:12px;color:#222;letter-spacing:-0.321px;">MAINTENU Bérénice</div>
<div class="t" style="left:1774.50px;top:490.04px;font-size:12px;line-height:12px;color:#222;letter-spacing:-0.503px;">FREMION Sylvain</div>
<div style="left:376.6px;top:466.6px;width:875.1999999999999px;height:209.89999999999998px;background:#ffffff;box-shadow:1.5px 2px 4px rgba(0,0,0,0.6),0 0 3.5px rgba(0,0,0,0.3);"></div>
<div style="left:376.6px;top:466.6px;width:875.1999999999999px;height:35.299999999999955px;background:#eff4f8;"></div>
<div class="t" style="left:381.00px;top:476.21px;font-size:14.75px;line-height:14.75px;color:#34536f;letter-spacing:-0.030px;">Commandé</div>
<svg width="1912" height="998" style="left:0;top:0"><rect x="1121.1" y="502.4" width="72.70000000000005" height="154.80000000000007" fill="#3b6187"/><rect x="377.5" y="626.1" width="816.3" height="31.100000000000023" fill="#3b6187"/><rect x="377.5" y="502.4" width="743.5999999999999" height="1" fill="#d3d3d3"/><rect x="377.5" y="533.3" width="743.5999999999999" height="1" fill="#d3d3d3"/><rect x="377.5" y="564.4" width="743.5999999999999" height="1" fill="#d3d3d3"/><rect x="377.5" y="595.3" width="743.5999999999999" height="1" fill="#d3d3d3"/><rect x="377.5" y="626.1" width="743.5999999999999" height="1" fill="#d3d3d3"/><rect x="449.4" y="502.4" width="1" height="123.70000000000005" fill="#d3d3d3"/><rect x="506.3" y="502.4" width="1" height="123.70000000000005" fill="#d3d3d3"/><rect x="567.7" y="502.4" width="1" height="123.70000000000005" fill="#d3d3d3"/><rect x="622.5" y="502.4" width="1" height="123.70000000000005" fill="#d3d3d3"/><rect x="677.6" y="502.4" width="1" height="123.70000000000005" fill="#d3d3d3"/><rect x="727.3" y="502.4" width="1" height="123.70000000000005" fill="#d3d3d3"/><rect x="784.7" y="502.4" width="1" height="123.70000000000005" fill="#d3d3d3"/><rect x="839.7" y="502.4" width="1" height="123.70000000000005" fill="#d3d3d3"/><rect x="897.4" y="502.4" width="1" height="123.70000000000005" fill="#d3d3d3"/><rect x="952.3" y="502.4" width="1" height="123.70000000000005" fill="#d3d3d3"/><rect x="1009.3" y="502.4" width="1" height="123.70000000000005" fill="#d3d3d3"/><rect x="1064.6" y="502.4" width="1" height="123.70000000000005" fill="#d3d3d3"/></svg>
<div class="t" style="left:453.40px;top:510.24px;font-size:12px;line-height:12px;color:#1e1e1e;letter-spacing:-0.293px;">janv.</div>
<div class="t" style="left:510.30px;top:510.24px;font-size:12px;line-height:12px;color:#1e1e1e;letter-spacing:-0.272px;">févr.</div>
<div class="t" style="left:571.70px;top:510.24px;font-size:12px;line-height:12px;color:#1e1e1e;letter-spacing:-0.400px;">mars</div>
<div class="t" style="left:626.50px;top:510.24px;font-size:12px;line-height:12px;color:#1e1e1e;letter-spacing:-0.290px;">avr.</div>
<div class="t" style="left:681.60px;top:510.24px;font-size:12px;line-height:12px;color:#1e1e1e;letter-spacing:-0.387px;">mai</div>
<div class="t" style="left:731.30px;top:510.24px;font-size:12px;line-height:12px;color:#1e1e1e;letter-spacing:-0.280px;">juin</div>
<div class="t" style="left:788.70px;top:510.24px;font-size:12px;line-height:12px;color:#1e1e1e;letter-spacing:-0.216px;">juil.</div>
<div class="t" style="left:843.70px;top:510.24px;font-size:12px;line-height:12px;color:#1e1e1e;letter-spacing:-0.350px;">août</div>
<div class="t" style="left:901.40px;top:510.24px;font-size:12px;line-height:12px;color:#1e1e1e;letter-spacing:-0.312px;">sept.</div>
<div class="t" style="left:956.30px;top:510.24px;font-size:12px;line-height:12px;color:#1e1e1e;letter-spacing:-0.290px;">oct.</div>
<div class="t" style="left:1013.30px;top:510.24px;font-size:12px;line-height:12px;color:#1e1e1e;letter-spacing:-0.327px;">nov.</div>
<div class="t" style="left:1068.60px;top:510.24px;font-size:12px;line-height:12px;color:#1e1e1e;letter-spacing:-0.340px;">déc.</div>
<div class="t" style="left:1126.10px;top:510.24px;font-size:12px;line-height:12px;color:#ffffff;font-weight:bold;letter-spacing:-0.349px;">Grand total</div>
<div class="t" style="left:382.40px;top:540.74px;font-size:12px;line-height:12px;color:#1e1e1e;letter-spacing:-0.400px;">2024</div>
<div class="t" style="left:459.13px;top:540.74px;font-size:12px;line-height:12px;color:#1e1e1e;letter-spacing:-0.372px;">164 091</div>
<div class="t" style="left:520.53px;top:540.74px;font-size:12px;line-height:12px;color:#1e1e1e;letter-spacing:-0.372px;">330 299</div>
<div class="t" style="left:575.33px;top:540.74px;font-size:12px;line-height:12px;color:#1e1e1e;letter-spacing:-0.372px;">206 219</div>
<div class="t" style="left:636.70px;top:540.74px;font-size:12px;line-height:12px;color:#1e1e1e;letter-spacing:-0.367px;">12 178</div>
<div class="t" style="left:686.40px;top:540.74px;font-size:12px;line-height:12px;color:#1e1e1e;letter-spacing:-0.367px;">20 400</div>
<div class="t" style="left:743.80px;top:540.74px;font-size:12px;line-height:12px;color:#1e1e1e;letter-spacing:-0.367px;">21 354</div>
<div class="t" style="left:792.53px;top:540.74px;font-size:12px;line-height:12px;color:#1e1e1e;letter-spacing:-0.372px;">144 913</div>
<div class="t" style="left:850.23px;top:540.74px;font-size:12px;line-height:12px;color:#1e1e1e;letter-spacing:-0.372px;">880 779</div>
<div class="t" style="left:917.68px;top:540.74px;font-size:12px;line-height:12px;color:#1e1e1e;letter-spacing:-0.360px;">9 719</div>
<div class="t" style="left:968.40px;top:540.74px;font-size:12px;line-height:12px;color:#1e1e1e;letter-spacing:-0.367px;">10 648</div>
<div class="t" style="left:1017.43px;top:540.74px;font-size:12px;line-height:12px;color:#1e1e1e;letter-spacing:-0.372px;">131 343</div>
<div class="t" style="left:1137.22px;top:540.74px;font-size:12px;line-height:12px;color:#ffffff;font-weight:bold;letter-spacing:-0.356px;">1 931 943</div>
<div class="t" style="left:382.40px;top:571.74px;font-size:12px;line-height:12px;color:#1e1e1e;letter-spacing:-0.400px;">2025</div>
<div class="t" style="left:465.40px;top:571.74px;font-size:12px;line-height:12px;color:#1e1e1e;letter-spacing:-0.367px;">27 204</div>
<div class="t" style="left:520.53px;top:571.74px;font-size:12px;line-height:12px;color:#1e1e1e;letter-spacing:-0.372px;">436 514</div>
<div class="t" style="left:581.60px;top:571.74px;font-size:12px;line-height:12px;color:#1e1e1e;letter-spacing:-0.367px;">42 993</div>
<div class="t" style="left:630.43px;top:571.74px;font-size:12px;line-height:12px;color:#1e1e1e;letter-spacing:-0.372px;">186 775</div>
<div class="t" style="left:686.40px;top:571.74px;font-size:12px;line-height:12px;color:#1e1e1e;letter-spacing:-0.367px;">15 674</div>
<div class="t" style="left:737.53px;top:571.74px;font-size:12px;line-height:12px;color:#1e1e1e;letter-spacing:-0.372px;">519 442</div>
<div class="t" style="left:792.53px;top:571.74px;font-size:12px;line-height:12px;color:#1e1e1e;letter-spacing:-0.372px;">186 759</div>
<div class="t" style="left:850.23px;top:571.74px;font-size:12px;line-height:12px;color:#1e1e1e;letter-spacing:-0.372px;">834 740</div>
<div class="t" style="left:905.13px;top:571.74px;font-size:12px;line-height:12px;color:#1e1e1e;letter-spacing:-0.372px;">188 732</div>
<div class="t" style="left:962.13px;top:571.74px;font-size:12px;line-height:12px;color:#1e1e1e;letter-spacing:-0.372px;">197 595</div>
<div class="t" style="left:1023.70px;top:571.74px;font-size:12px;line-height:12px;color:#1e1e1e;letter-spacing:-0.367px;">97 478</div>
<div class="t" style="left:1073.93px;top:571.74px;font-size:12px;line-height:12px;color:#1e1e1e;letter-spacing:-0.372px;">858 522</div>
<div class="t" style="left:1137.22px;top:571.74px;font-size:12px;line-height:12px;color:#ffffff;font-weight:bold;letter-spacing:-0.356px;">3 592 428</div>
<div class="t" style="left:382.40px;top:602.74px;font-size:12px;line-height:12px;color:#1e1e1e;letter-spacing:-0.400px;">2026</div>
<div class="t" style="left:465.40px;top:602.74px;font-size:12px;line-height:12px;color:#1e1e1e;letter-spacing:-0.367px;">76 728</div>
<div class="t" style="left:520.53px;top:602.74px;font-size:12px;line-height:12px;color:#1e1e1e;letter-spacing:-0.372px;">471 495</div>
<div class="t" style="left:1146.63px;top:602.74px;font-size:12px;line-height:12px;color:#ffffff;font-weight:bold;letter-spacing:-0.372px;">548 224</div>
<div class="t" style="left:382.40px;top:633.74px;font-size:12px;line-height:12px;color:#ffffff;font-weight:bold;letter-spacing:-0.349px;">Grand total</div>
<div class="t" style="left:459.13px;top:633.74px;font-size:12px;line-height:12px;color:#ffffff;font-weight:bold;letter-spacing:-0.372px;">268 024</div>
<div class="t" style="left:511.12px;top:633.74px;font-size:12px;line-height:12px;color:#ffffff;font-weight:bold;letter-spacing:-0.356px;">1 238 309</div>
<div class="t" style="left:575.33px;top:633.74px;font-size:12px;line-height:12px;color:#ffffff;font-weight:bold;letter-spacing:-0.372px;">249 212</div>
<div class="t" style="left:630.43px;top:633.74px;font-size:12px;line-height:12px;color:#ffffff;font-weight:bold;letter-spacing:-0.372px;">198 953</div>
<div class="t" style="left:686.40px;top:633.74px;font-size:12px;line-height:12px;color:#ffffff;font-weight:bold;letter-spacing:-0.367px;">36 074</div>
<div class="t" style="left:737.53px;top:633.74px;font-size:12px;line-height:12px;color:#ffffff;font-weight:bold;letter-spacing:-0.372px;">540 796</div>
<div class="t" style="left:792.53px;top:633.74px;font-size:12px;line-height:12px;color:#ffffff;font-weight:bold;letter-spacing:-0.372px;">331 672</div>
<div class="t" style="left:840.82px;top:633.74px;font-size:12px;line-height:12px;color:#ffffff;font-weight:bold;letter-spacing:-0.356px;">1 715 519</div>
<div class="t" style="left:905.13px;top:633.74px;font-size:12px;line-height:12px;color:#ffffff;font-weight:bold;letter-spacing:-0.372px;">198 451</div>
<div class="t" style="left:962.13px;top:633.74px;font-size:12px;line-height:12px;color:#ffffff;font-weight:bold;letter-spacing:-0.372px;">208 243</div>
<div class="t" style="left:1017.43px;top:633.74px;font-size:12px;line-height:12px;color:#ffffff;font-weight:bold;letter-spacing:-0.372px;">228 821</div>
<div class="t" style="left:1073.93px;top:633.74px;font-size:12px;line-height:12px;color:#ffffff;font-weight:bold;letter-spacing:-0.372px;">858 522</div>
<div class="t" style="left:1137.22px;top:633.74px;font-size:12px;line-height:12px;color:#ffffff;font-weight:bold;letter-spacing:-0.356px;">6 072 595</div>
<div style="left:376.2px;top:692.5px;width:875.5999999999999px;height:286.1px;background:#ffffff;box-shadow:1.5px 2px 4px rgba(0,0,0,0.6),0 0 3.5px rgba(0,0,0,0.3);"></div>
<div style="left:376.2px;top:692.5px;width:875.5999999999999px;height:35.200000000000045px;background:#eff4f8;"></div>
<div class="t" style="left:381.40px;top:702.51px;font-size:14.75px;line-height:14.75px;color:#34536f;letter-spacing:0.097px;">Évolution du commandé cumulé</div>
<div class="t" style="left:387.36px;top:732.94px;font-size:12px;line-height:12px;color:#222;letter-spacing:-0.415px;">4 000 000</div>
<div class="t" style="left:387.36px;top:785.54px;font-size:12px;line-height:12px;color:#222;letter-spacing:-0.415px;">3 000 000</div>
<div class="t" style="left:387.36px;top:838.14px;font-size:12px;line-height:12px;color:#222;letter-spacing:-0.415px;">2 000 000</div>
<div class="t" style="left:387.36px;top:890.74px;font-size:12px;line-height:12px;color:#222;letter-spacing:-0.415px;">1 000 000</div>
<div class="t" style="left:434.83px;top:960.24px;font-size:12px;line-height:12px;color:#222;letter-spacing:-0.342px;">janv.</div>
<div class="t" style="left:503.52px;top:960.24px;font-size:12px;line-height:12px;color:#222;letter-spacing:-0.317px;">févr.</div>
<div class="t" style="left:569.53px;top:960.24px;font-size:12px;line-height:12px;color:#222;letter-spacing:-0.467px;">mars</div>
<div class="t" style="left:640.80px;top:960.24px;font-size:12px;line-height:12px;color:#222;letter-spacing:-0.338px;">avr.</div>
<div class="t" style="left:708.66px;top:960.24px;font-size:12px;line-height:12px;color:#222;letter-spacing:-0.451px;">mai</div>
<div class="t" style="left:776.83px;top:960.24px;font-size:12px;line-height:12px;color:#222;letter-spacing:-0.327px;">juin</div>
<div class="t" style="left:845.01px;top:960.24px;font-size:12px;line-height:12px;color:#222;letter-spacing:-0.252px;">juil.</div>
<div class="t" style="left:910.39px;top:960.24px;font-size:12px;line-height:12px;color:#222;letter-spacing:-0.409px;">août</div>
<div class="t" style="left:977.01px;top:960.24px;font-size:12px;line-height:12px;color:#222;letter-spacing:-0.364px;">sept.</div>
<div class="t" style="left:1047.98px;top:960.24px;font-size:12px;line-height:12px;color:#222;letter-spacing:-0.338px;">oct.</div>
<div class="t" style="left:1114.70px;top:960.24px;font-size:12px;line-height:12px;color:#222;letter-spacing:-0.381px;">nov.</div>
<div class="t" style="left:1182.15px;top:960.24px;font-size:12px;line-height:12px;color:#222;letter-spacing:-0.397px;">déc.</div>
<svg width="1912" height="998" style="left:0;top:0"><rect x="446.0" y="738.5" width="1.2" height="210.79999999999995" fill="#d0d0d0"/><rect x="446.0" y="948.6999999999999" width="747.2" height="1.2" fill="#d0d0d0"/><rect x="441" y="738.4" width="5" height="1" fill="#d0d0d0"/><rect x="441" y="791.0" width="5" height="1" fill="#d0d0d0"/><rect x="441" y="843.5999999999999" width="5" height="1" fill="#d0d0d0"/><rect x="441" y="896.1999999999999" width="5" height="1" fill="#d0d0d0"/><rect x="441" y="948.8" width="5" height="1" fill="#d0d0d0"/><rect x="445.7" y="949.3" width="1" height="5.5" fill="#d0d0d0"/><rect x="513.5636363636363" y="949.3" width="1" height="5.5" fill="#d0d0d0"/><rect x="581.4272727272727" y="949.3" width="1" height="5.5" fill="#d0d0d0"/><rect x="649.290909090909" y="949.3" width="1" height="5.5" fill="#d0d0d0"/><rect x="717.1545454545454" y="949.3" width="1" height="5.5" fill="#d0d0d0"/><rect x="785.0181818181818" y="949.3" width="1" height="5.5" fill="#d0d0d0"/><rect x="852.8818181818181" y="949.3" width="1" height="5.5" fill="#d0d0d0"/><rect x="920.7454545454545" y="949.3" width="1" height="5.5" fill="#d0d0d0"/><rect x="988.6090909090908" y="949.3" width="1" height="5.5" fill="#d0d0d0"/><rect x="1056.4727272727273" y="949.3" width="1" height="5.5" fill="#d0d0d0"/><rect x="1124.3363636363636" y="949.3" width="1" height="5.5" fill="#d0d0d0"/><rect x="1192.2" y="949.3" width="1" height="5.5" fill="#d0d0d0"/><polyline points="446.20,945.26 514.06,920.46" fill="none" stroke="#5ec8f8" stroke-width="2" stroke-linejoin="round"/><polyline points="446.20,947.87 514.06,924.91 581.93,922.65 649.79,912.82 717.65,912.00 785.52,884.68 853.38,874.85 921.25,830.94 989.11,821.02 1056.97,810.62 1124.84,805.50 1192.70,760.34" fill="none" stroke="#e8005b" stroke-width="2" stroke-linejoin="round"/><polyline points="446.20,940.67 514.06,923.30 581.93,912.45 649.79,911.81 717.65,910.73 785.52,909.61 853.38,901.99 921.25,855.66 989.11,855.15 1056.97,854.59 1124.84,847.68 1192.70,847.68" fill="none" stroke="#0a74d4" stroke-width="2" stroke-linejoin="round"/><rect x="1209" y="827.9" width="10" height="10" fill="#0a74d4"/><rect x="1209" y="847.9" width="10" height="10" fill="#e8005b"/><rect x="1209" y="867.9" width="10" height="10" fill="#5ec8f8"/></svg>
<div class="t" style="left:1222.00px;top:827.04px;font-size:12px;line-height:12px;color:#222;letter-spacing:-0.467px;">2024</div>
<div class="t" style="left:1222.00px;top:847.04px;font-size:12px;line-height:12px;color:#222;letter-spacing:-0.467px;">2025</div>
<div class="t" style="left:1222.00px;top:867.04px;font-size:12px;line-height:12px;color:#222;letter-spacing:-0.467px;">2026</div>
<div style="left:1265.8px;top:615.8px;width:620.6000000000001px;height:362.6px;background:#ffffff;box-shadow:1.5px 2px 4px rgba(0,0,0,0.6),0 0 3.5px rgba(0,0,0,0.3);"></div>
<div style="left:1265.8px;top:615.8px;width:620.6000000000001px;height:35.80000000000007px;background:#eff4f8;"></div>
<div class="t" style="left:1270.90px;top:626.11px;font-size:14.75px;line-height:14.75px;color:#34536f;letter-spacing:0.046px;">Panier moyen commandé par mois</div>
<div class="t" style="left:1286.87px;top:902.28px;font-size:12px;line-height:12px;color:#222;letter-spacing:-0.428px;">20 000</div>
<div class="t" style="left:1286.87px;top:861.33px;font-size:12px;line-height:12px;color:#222;letter-spacing:-0.428px;">40 000</div>
<div class="t" style="left:1286.87px;top:820.37px;font-size:12px;line-height:12px;color:#222;letter-spacing:-0.428px;">60 000</div>
<div class="t" style="left:1286.87px;top:779.41px;font-size:12px;line-height:12px;color:#222;letter-spacing:-0.428px;">80 000</div>
<div class="t" style="left:1280.66px;top:738.46px;font-size:12px;line-height:12px;color:#222;letter-spacing:-0.434px;">100 000</div>
<div class="t" style="left:1280.66px;top:697.50px;font-size:12px;line-height:12px;color:#222;letter-spacing:-0.434px;">120 000</div>
<div class="t" style="left:1280.66px;top:656.54px;font-size:12px;line-height:12px;color:#222;letter-spacing:-0.434px;">140 000</div>
<div class="t" style="left:1340.59px;top:959.54px;font-size:12px;line-height:12px;color:#222;letter-spacing:-0.342px;">janv.</div>
<div class="t" style="left:1383.94px;top:959.54px;font-size:12px;line-height:12px;color:#222;letter-spacing:-0.317px;">févr.</div>
<div class="t" style="left:1424.61px;top:959.54px;font-size:12px;line-height:12px;color:#222;letter-spacing:-0.467px;">mars</div>
<div class="t" style="left:1470.54px;top:959.54px;font-size:12px;line-height:12px;color:#222;letter-spacing:-0.338px;">avr.</div>
<div class="t" style="left:1513.07px;top:959.54px;font-size:12px;line-height:12px;color:#222;letter-spacing:-0.451px;">mai</div>
<div class="t" style="left:1555.90px;top:959.54px;font-size:12px;line-height:12px;color:#222;letter-spacing:-0.327px;">juin</div>
<div class="t" style="left:1598.74px;top:959.54px;font-size:12px;line-height:12px;color:#222;letter-spacing:-0.252px;">juil.</div>
<div class="t" style="left:1638.78px;top:959.54px;font-size:12px;line-height:12px;color:#222;letter-spacing:-0.409px;">août</div>
<div class="t" style="left:1680.07px;top:959.54px;font-size:12px;line-height:12px;color:#222;letter-spacing:-0.364px;">sept.</div>
<div class="t" style="left:1725.69px;top:959.54px;font-size:12px;line-height:12px;color:#222;letter-spacing:-0.338px;">oct.</div>
<div class="t" style="left:1767.08px;top:959.54px;font-size:12px;line-height:12px;color:#222;letter-spacing:-0.381px;">nov.</div>
<div class="t" style="left:1809.19px;top:959.54px;font-size:12px;line-height:12px;color:#222;letter-spacing:-0.397px;">déc.</div>
<svg width="1912" height="998" style="left:0;top:0"><rect x="1330.2" y="662" width="1.2" height="287.20000000000005" fill="#d0d0d0"/><rect x="1330.2" y="948.6" width="511.29999999999995" height="1.2" fill="#d0d0d0"/><rect x="1325.3" y="948.7" width="5" height="1" fill="#d0d0d0"/><rect x="1325.3" y="907.7428571428571" width="5" height="1" fill="#d0d0d0"/><rect x="1325.3" y="866.7857142857143" width="5" height="1" fill="#d0d0d0"/><rect x="1325.3" y="825.8285714285714" width="5" height="1" fill="#d0d0d0"/><rect x="1325.3" y="784.8714285714286" width="5" height="1" fill="#d0d0d0"/><rect x="1325.3" y="743.9142857142857" width="5" height="1" fill="#d0d0d0"/><rect x="1325.3" y="702.9571428571428" width="5" height="1" fill="#d0d0d0"/><rect x="1325.3" y="662.0" width="5" height="1" fill="#d0d0d0"/><rect x="1330.2" y="949.2" width="1" height="5" fill="#d0d0d0"/><rect x="1372.7250000000001" y="949.2" width="1" height="5" fill="#d0d0d0"/><rect x="1415.25" y="949.2" width="1" height="5" fill="#d0d0d0"/><rect x="1457.775" y="949.2" width="1" height="5" fill="#d0d0d0"/><rect x="1500.3" y="949.2" width="1" height="5" fill="#d0d0d0"/><rect x="1542.825" y="949.2" width="1" height="5" fill="#d0d0d0"/><rect x="1585.35" y="949.2" width="1" height="5" fill="#d0d0d0"/><rect x="1627.875" y="949.2" width="1" height="5" fill="#d0d0d0"/><rect x="1670.4" y="949.2" width="1" height="5" fill="#d0d0d0"/><rect x="1712.925" y="949.2" width="1" height="5" fill="#d0d0d0"/><rect x="1755.45" y="949.2" width="1" height="5" fill="#d0d0d0"/><rect x="1797.975" y="949.2" width="1" height="5" fill="#d0d0d0"/><rect x="1840.5" y="949.2" width="1" height="5" fill="#d0d0d0"/><rect x="1336.96" y="882.85" width="10" height="66.35" fill="#0a74d4"/><rect x="1346.96" y="893.70" width="10" height="55.50" fill="#e8005b"/><rect x="1356.96" y="918.89" width="10" height="30.31" fill="#5ec8f8"/><rect x="1379.49" y="814.86" width="10" height="134.34" fill="#0a74d4"/><rect x="1389.49" y="868.72" width="10" height="80.48" fill="#e8005b"/><rect x="1399.49" y="707.96" width="10" height="241.24" fill="#5ec8f8"/><rect x="1422.01" y="896.77" width="15" height="52.43" fill="#0a74d4"/><rect x="1437.01" y="920.94" width="15" height="28.26" fill="#e8005b"/><rect x="1464.54" y="941.83" width="15" height="7.37" fill="#0a74d4"/><rect x="1479.54" y="872.61" width="15" height="76.59" fill="#e8005b"/><rect x="1507.06" y="928.72" width="15" height="20.48" fill="#0a74d4"/><rect x="1522.06" y="938.76" width="15" height="10.44" fill="#e8005b"/><rect x="1549.59" y="940.60" width="15" height="8.60" fill="#0a74d4"/><rect x="1564.59" y="886.74" width="15" height="62.46" fill="#e8005b"/><rect x="1592.11" y="926.88" width="15" height="22.32" fill="#0a74d4"/><rect x="1607.11" y="872.81" width="15" height="76.39" fill="#e8005b"/><rect x="1634.64" y="768.58" width="15" height="180.62" fill="#0a74d4"/><rect x="1649.64" y="759.77" width="15" height="189.43" fill="#e8005b"/><rect x="1677.16" y="929.95" width="15" height="19.25" fill="#0a74d4"/><rect x="1692.16" y="872.81" width="15" height="76.39" fill="#e8005b"/><rect x="1719.69" y="945.92" width="15" height="3.28" fill="#0a74d4"/><rect x="1734.69" y="891.86" width="15" height="57.34" fill="#e8005b"/><rect x="1762.21" y="883.05" width="15" height="66.15" fill="#0a74d4"/><rect x="1777.21" y="916.84" width="15" height="32.36" fill="#e8005b"/><rect x="1819.74" y="832.88" width="15" height="116.32" fill="#e8005b"/><rect x="1844.4" y="789.7" width="10" height="10" fill="#0a74d4"/><rect x="1844.4" y="809.7" width="10" height="10" fill="#e8005b"/><rect x="1844.4" y="829.7" width="10" height="10" fill="#5ec8f8"/></svg>
<div class="t" style="left:1857.20px;top:788.84px;font-size:12px;line-height:12px;color:#222;letter-spacing:-0.467px;">2024</div>
<div class="t" style="left:1857.20px;top:808.84px;font-size:12px;line-height:12px;color:#222;letter-spacing:-0.467px;">2025</div>
<div class="t" style="left:1857.20px;top:828.84px;font-size:12px;line-height:12px;color:#222;letter-spacing:-0.467px;">2026</div>
</body></html>
